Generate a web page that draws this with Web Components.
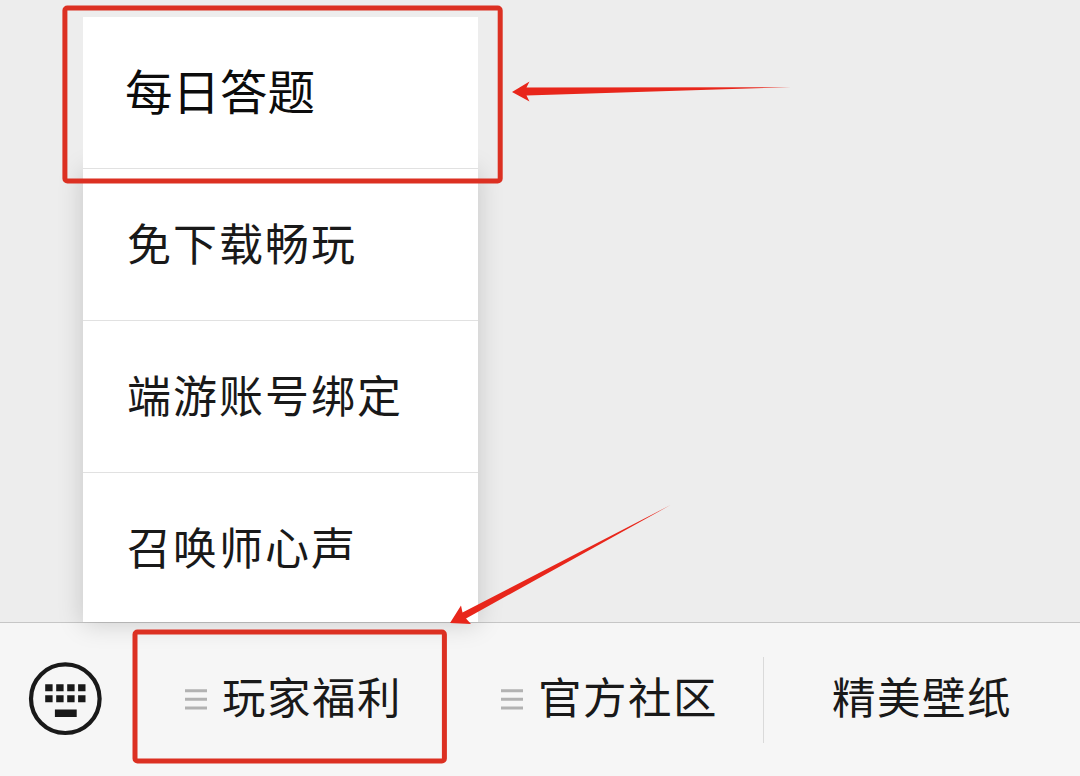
<!DOCTYPE html>
<html lang="zh-CN">
<head>
<meta charset="utf-8">
<title>公众号菜单</title>
<style>
html,body{margin:0;padding:0}
body{width:1080px;height:776px;overflow:hidden;background:#ededed;font-family:"Noto Sans CJK SC","Noto Sans",sans-serif;color:#191919}
</style>
</head>
<body>
<chat-page>
  <popup-menu slot="popup">
    <menu-row large slot="lead">每日答题</menu-row>
    <menu-row>免下载畅玩</menu-row>
    <menu-row>端游账号绑定</menu-row>
    <menu-row last>召唤师心声</menu-row>
  </popup-menu>
  <bottom-bar slot="bar">
    <bar-tab menu>玩家福利</bar-tab>
    <bar-tab menu>官方社区</bar-tab>
    <bar-tab divided>精美壁纸</bar-tab>
  </bottom-bar>
  <red-marks slot="marks"></red-marks>
</chat-page>
<script>
function define(name, html){
  customElements.define(name, class extends HTMLElement{
    constructor(){
      super();
      const t=document.createElement('template');
      t.innerHTML=html;
      this.attachShadow({mode:'open'}).append(t.content.cloneNode(true));
    }
  });
}
define('chat-page',`<style>
:host{display:flex;flex-direction:column;position:relative;width:1080px;height:776px;overflow:hidden;background:#ededed}
main{height:622px;box-sizing:border-box;padding:17px 0 0 83px;position:relative;z-index:1}
</style><main><slot name="popup"></slot></main><slot name="bar"></slot><slot name="marks"></slot>`);
define('popup-menu',`<style>
:host{display:flex;flex-direction:column;width:395px}
.lead{background:#fff;height:152px;position:relative;z-index:1}
.rest{background:#fff;height:453px;box-shadow:0 2px 24px rgba(0,0,0,.17)}
</style><div class="lead"><slot name="lead"></slot></div><div class="rest"><slot></slot></div>`);
define('menu-row',`<style>
:host{display:flex;align-items:center;height:152px;box-sizing:border-box;padding:0 0 5px 44px;border-bottom:1px solid #e1e1e1;font-size:44px;letter-spacing:2px;line-height:60px;white-space:nowrap}
:host([large]){font-size:47.5px;letter-spacing:0;padding:0 0 6px 42px;color:#0c0c0c}
:host([last]){height:149px;padding-bottom:4px;border:0}
</style><slot></slot>`);
define('bottom-bar',`<style>
:host{display:flex;height:154px;box-sizing:border-box;background:#f6f6f6;border-top:1px solid #c6c6c6}
.key{width:131px;box-sizing:border-box;padding:0 1px 2px 0;display:flex;align-items:center;justify-content:center}
svg{display:block}
nav{flex:1;display:grid;grid-template-columns:316px 316px 1fr}
</style><div class="key"><svg width="74" height="74" viewBox="0 0 74 74"><circle cx="37.3" cy="36.7" r="34.3" fill="none" stroke="#191919" stroke-width="4.2"/><path fill="#191919" d="M17.2 22.3h7.4v7h-7.4zM28.2 22.3h7.4v7h-7.4zM39.2 22.3h7.4v7h-7.4zM50.1 22.3h7.4v7h-7.4zM17.2 33.3h7.4v7h-7.4zM28.2 33.3h7.4v7h-7.4zM39.2 33.3h7.4v7h-7.4zM50.1 33.3h7.4v7h-7.4zM26.9 47.6h21.8v7.4H26.9z"/></svg></div><nav><slot></slot></nav>`);
define('bar-tab',`<style>
:host{display:flex;align-items:center;justify-content:flex-start;box-sizing:border-box;height:153px;padding-left:54px;font-size:43.5px;letter-spacing:1.5px;line-height:60px;white-space:nowrap}
svg{display:none;margin-right:15px}
:host([menu]) svg{display:block}
i{display:none;width:1px;height:86px;background:#dadada}
span{display:block;padding-bottom:8px}
:host([divided]) i{display:block;margin-right:68px}
:host([divided]){padding-left:0}
</style><i></i><svg width="22" height="21" viewBox="0 0 22 21"><path d="M0 1.7h22M0 10.3h22M0 18.9h22" stroke="#b2b2b2" stroke-width="3"/></svg><span><slot></slot></span>`);
define('red-marks',`<style>
:host{position:absolute;inset:0;z-index:3;pointer-events:none}
svg{display:block}
</style><svg width="1080" height="776" viewBox="0 0 1080 776"><g fill="none" stroke="#dc3022" stroke-width="5"><rect x="64.9" y="8" width="435.3" height="173" rx="2.5"/><rect x="135" y="632" width="309.4" height="129" rx="2.5"/></g><g fill="#e8261b"><path d="M512 92L529.5 81.5L526.5 87.6L791 87.2L526.5 95.5L529.5 101.5Z"/><path d="M450 623L461 605.5L462.5 612.5L671 504.8L466 618.5L471 624Z"/></g></svg>`);
</script>
</body>
</html>
